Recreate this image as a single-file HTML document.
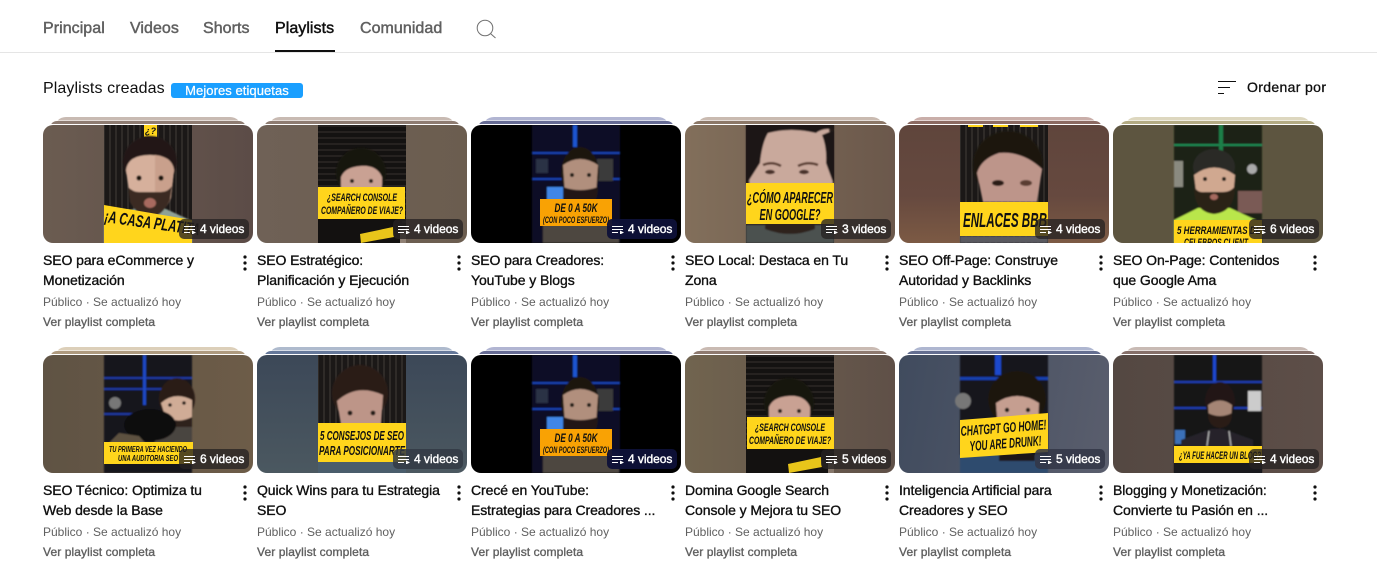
<!DOCTYPE html>
<html lang="es"><head><meta charset="utf-8"><title>Playlists</title>
<style>
html,body{margin:0;padding:0;background:#fff;width:1377px;height:564px;overflow:hidden;font-family:"Liberation Sans",Arial,sans-serif;color:#0f0f0f}
.a{position:absolute;white-space:nowrap}
.tab{top:19px;font-size:16px;line-height:20px;color:#606060;-webkit-text-stroke:.45px currentColor;letter-spacing:.05px}
.c{position:absolute;width:210px;height:210px}
.l1,.l2{position:absolute;display:block;height:14px;clip-path:inset(0 0 11px 0)}
.l1{left:11px;width:188px;top:-8px;border-radius:12px 12px 0 0;clip-path:inset(0 0 10.5px 0)}
.l2{left:7px;width:196px;top:-4px;border-radius:7px 7px 0 0}
.t{position:absolute;left:0;top:0;width:210px;height:118px;border-radius:10px;overflow:hidden}
.t>svg{position:absolute;left:0;top:0}
.b{position:absolute;left:136px;top:94px;width:70px;height:20px;border-radius:5px;background:rgba(38,34,34,.78);color:#fff;font-size:12px;line-height:20px;-webkit-text-stroke:.4px #fff}
.b svg{position:absolute;left:5px;top:7px}
.b span{position:absolute;left:21px;top:0;white-space:nowrap;letter-spacing:-.05px}
.ti{position:absolute;left:0;top:125px;font-size:14px;line-height:20px;white-space:nowrap;-webkit-text-stroke:.35px #0f0f0f;letter-spacing:-.08px}
.d{position:absolute;left:199px;top:130px}
.m{position:absolute;left:0;top:169px;font-size:12px;line-height:16px;color:#606060;white-space:nowrap}
.v{position:absolute;left:0;top:189px;font-size:12px;line-height:16px;color:#606060;white-space:nowrap;-webkit-text-stroke:.35px #606060;letter-spacing:.1px}
svg text{font-family:"Liberation Sans",Arial,sans-serif;font-weight:700;font-style:italic;fill:#111}
</style></head><body>
<svg width="0" height="0" style="position:absolute"><defs>
<pattern id="st" width="6" height="8" patternUnits="userSpaceOnUse"><rect width="6" height="8" fill="#1b1817"/><rect width="2" height="8" fill="#2f2b28"/></pattern>
<pattern id="sh" width="6" height="6" patternUnits="userSpaceOnUse"><rect width="6" height="6" fill="#141211"/><rect width="6" height="2" fill="#262220"/></pattern>
<filter id="bl" x="-10%" y="-10%" width="120%" height="120%"><feGaussianBlur stdDeviation=".9"/></filter>
</defs></svg>

<div class="a tab" style="left:43px">Principal</div>
<div class="a tab" style="left:130px">Videos</div>
<div class="a tab" style="left:203px">Shorts</div>
<div class="a tab" style="left:275px;color:#0f0f0f">Playlists</div>
<div class="a tab" style="left:360px">Comunidad</div>
<svg class="a" style="left:476px;top:19px" width="21" height="20" viewBox="0 0 21 20" fill="none" stroke="#707070" stroke-width="1"><circle cx="9" cy="9" r="7.8"/><path d="M14.7 14.7L19.5 19"/></svg>
<div class="a" style="left:0;top:52px;width:1377px;height:1px;background:#e5e5e5"></div>
<div class="a" style="left:275px;top:50px;width:60px;height:2px;background:#0f0f0f"></div>

<div class="a" style="left:43px;top:79px;font-size:16px;line-height:20px;letter-spacing:.1px">Playlists creadas</div>
<div class="a" style="left:171px;top:83px;width:132px;height:15px;border-radius:3px;background:#1a9fff;color:#fff;font-size:13px;line-height:15px;text-align:center;-webkit-text-stroke:.25px #fff;letter-spacing:.06px">Mejores etiquetas</div>
<svg class="a" style="left:1218px;top:81px" width="19" height="14" fill="#0f0f0f"><rect width="18" height="1"/><rect y="6" width="12" height="1"/><rect y="12" width="6" height="1"/></svg>
<div class="a" style="left:1247px;top:77px;font-size:14px;line-height:20px;letter-spacing:.35px;-webkit-text-stroke:.3px #0f0f0f">Ordenar por</div>

<!-- ROW 1 -->
<div class="c" style="left:43px;top:125px"><i class="l1" style="background:#c8bab2"></i><i class="l2" style="background:#8e7c72"></i>
<div class="t" style="background:linear-gradient(90deg,#6b5c51,#5c4c47)"><svg width="210" height="118">
<rect x="61" width="88" height="118" fill="url(#st)"/><rect x="101" width="13" height="12" fill="#ffd51c"/><text x="102" y="9" font-size="9">¿?</text>
<g filter="url(#bl)"><path d="M61 118V92l30-8h32l26 12v22z" fill="#8fa196"/><ellipse cx="107" cy="37" rx="27" ry="26" fill="#211815"/><path d="M83 45q2-15 24-15t24 15l-3 28q-6 15-21 15t-20-15z" fill="#d6b09c"/><path d="M112 30q17 2 19 15l-3 28q-5 13-16 15z" fill="#c9a08c"/><path d="M85 62q5 5 11 5h22q7 0 11-6l-2 14q-8 17-20 17t-20-15z" fill="#3a2a22"/><ellipse cx="107" cy="78" rx="6" ry="5" fill="#a86b5f"/><circle cx="96" cy="53" r="2.6" fill="#1a1210"/><circle cx="118" cy="53" r="2.6" fill="#1a1210"/></g>
<path d="M61 80l88 15v23H61z" fill="#ffd51c"/><text x="61" y="97" font-size="17" textLength="96" lengthAdjust="spacingAndGlyphs" transform="rotate(8 61 97)">¡A CASA PLATITA</text></svg>
<div class="b"><svg width="12" height="8" fill="#fff"><rect width="11" height="1"/><rect y="3" width="11" height="1"/><rect y="6" width="6" height="1"/><path d="M8 4.5l4 2-4 2z"/></svg><span>4 videos</span></div></div>
<div class="ti">SEO para eCommerce y<br>Monetización</div>
<svg class="d" width="6" height="16" fill="#0f0f0f"><circle cx="3" cy="2" r="1.6"/><circle cx="3" cy="8" r="1.6"/><circle cx="3" cy="14" r="1.6"/></svg>
<div class="m">Público · Se actualizó hoy</div><div class="v">Ver playlist completa</div></div>

<div class="c" style="left:257px;top:125px"><i class="l1" style="background:#c8bab2"></i><i class="l2" style="background:#8e7c72"></i>
<div class="t" style="background:linear-gradient(90deg,#6f6156,#6b5d4f)"><svg width="210" height="118">
<rect x="61" width="88" height="118" fill="url(#sh)"/>
<g filter="url(#bl)"><ellipse cx="104" cy="48" rx="25" ry="25" fill="#171210"/><path d="M84 52q4-10 20-11t21 11v12H84z" fill="#c9a193"/><circle cx="95" cy="56" r="2" fill="#241a16"/><circle cx="114" cy="56" r="2" fill="#241a16"/></g>
<path d="M61 93h84v25H61z" fill="#131110"/><rect x="143" y="104" width="6" height="14" fill="#8f8074"/>
<rect x="61" y="62" width="87" height="32" fill="#ffd51c"/>
<text x="105" y="76" font-size="11" text-anchor="middle" textLength="70" lengthAdjust="spacingAndGlyphs">¿SEARCH CONSOLE</text><text x="105" y="89" font-size="11" text-anchor="middle" textLength="82" lengthAdjust="spacingAndGlyphs">COMPAÑERO DE VIAJE?</text>
<path d="M103 109l33-7 1 10-33 6z" fill="#e8c51a"/></svg>
<div class="b"><svg width="12" height="8" fill="#fff"><rect width="11" height="1"/><rect y="3" width="11" height="1"/><rect y="6" width="6" height="1"/><path d="M8 4.5l4 2-4 2z"/></svg><span>4 videos</span></div></div>
<div class="ti">SEO Estratégico:<br>Planificación y Ejecución</div>
<svg class="d" width="6" height="16" fill="#0f0f0f"><circle cx="3" cy="2" r="1.6"/><circle cx="3" cy="8" r="1.6"/><circle cx="3" cy="14" r="1.6"/></svg>
<div class="m">Público · Se actualizó hoy</div><div class="v">Ver playlist completa</div></div>

<div class="c" style="left:471px;top:125px"><i class="l1" style="background:#b1b5d2"></i><i class="l2" style="background:#666b94"></i>
<div class="t" style="background:#000"><svg width="210" height="118">
<g filter="url(#bl)"><rect x="61" width="88" height="118" fill="#0a1026"/><path d="M61 27h88v2H61zM61 53h88v2H61z" fill="#1240b0"/><path d="M76 62h16v13H76z" fill="#3f86e6"/><rect x="102" width="4" height="22" fill="#1a55d0"/><rect x="65" y="34" width="12" height="14" fill="#2a3345"/><rect x="126" y="34" width="16" height="22" fill="#3a3a3a"/><path d="M72 118V98l22-8h30l24 8v20z" fill="#4d4641"/><ellipse cx="109" cy="48" rx="19" ry="26" fill="#1b1310"/><path d="M92 40q17-12 35 0l-2 30H94z" fill="#b18f7d"/><circle cx="101" cy="50" r="2" fill="#241a16"/><circle cx="118" cy="50" r="2" fill="#241a16"/><path d="M92 62q17 6 35 0 0 21-17 23-18-2-18-23z" fill="#241914"/></g>
<rect x="69" y="74" width="72" height="27" fill="#f9a204"/>
<text x="105" y="87" font-size="12" text-anchor="middle" textLength="43" lengthAdjust="spacingAndGlyphs">DE 0 A 50K</text><text x="105" y="98" font-size="9" text-anchor="middle" textLength="66" lengthAdjust="spacingAndGlyphs">(CON POCO ESFUERZO)</text></svg>
<div class="b" style="background:rgba(14,17,56,.95)"><svg width="12" height="8" fill="#fff"><rect width="11" height="1"/><rect y="3" width="11" height="1"/><rect y="6" width="6" height="1"/><path d="M8 4.5l4 2-4 2z"/></svg><span>4 videos</span></div></div>
<div class="ti">SEO para Creadores:<br>YouTube y Blogs</div>
<svg class="d" width="6" height="16" fill="#0f0f0f"><circle cx="3" cy="2" r="1.6"/><circle cx="3" cy="8" r="1.6"/><circle cx="3" cy="14" r="1.6"/></svg>
<div class="m">Público · Se actualizó hoy</div><div class="v">Ver playlist completa</div></div>

<div class="c" style="left:685px;top:125px"><i class="l1" style="background:#c9bab0"></i><i class="l2" style="background:#8c7868"></i>
<div class="t" style="background:linear-gradient(90deg,#826f5b,#6b584b)"><svg width="210" height="118">
<rect x="61" width="88" height="118" fill="#2a211d"/>
<g filter="url(#bl)"><path d="M66 0h78l4 62H64z" fill="#c9a99c"/><path d="M61 0h88v5q-10-3-18 3-25-6-48 0-6 10-8 30l-14 22zM149 5l-12 5q5 12 4 28l8 22z" fill="#1e1613"/><path d="M78 40q9-4 18 1M113 41q10-5 20-1" stroke="#5a3d30" stroke-width="2.5" fill="none"/><ellipse cx="85" cy="47" rx="5" ry="2.2" fill="#4a3229"/><ellipse cx="119" cy="47" rx="5" ry="2.2" fill="#4a3229"/><path d="M61 118v-18h88v18z" fill="#4c5150"/><path d="M80 98h50v6q-25 10-50 0z" fill="#2d231d"/></g>
<rect x="61" y="58" width="88" height="41" fill="#ffd51c"/>
<text x="105" y="78" font-size="16" text-anchor="middle" textLength="86" lengthAdjust="spacingAndGlyphs">¿CÓMO APARECER</text><text x="105" y="95" font-size="16" text-anchor="middle" textLength="61" lengthAdjust="spacingAndGlyphs">EN GOOGLE?</text></svg>
<div class="b"><svg width="12" height="8" fill="#fff"><rect width="11" height="1"/><rect y="3" width="11" height="1"/><rect y="6" width="6" height="1"/><path d="M8 4.5l4 2-4 2z"/></svg><span>3 videos</span></div></div>
<div class="ti">SEO Local: Destaca en Tu<br>Zona</div>
<svg class="d" width="6" height="16" fill="#0f0f0f"><circle cx="3" cy="2" r="1.6"/><circle cx="3" cy="8" r="1.6"/><circle cx="3" cy="14" r="1.6"/></svg>
<div class="m">Público · Se actualizó hoy</div><div class="v">Ver playlist completa</div></div>

<div class="c" style="left:899px;top:125px"><i class="l1" style="background:#c9aea9"></i><i class="l2" style="background:#8b6a62"></i>
<div class="t" style="background:linear-gradient(180deg,#5f453c 0%,#66493f 60%,#7c5a44 100%)"><svg width="210" height="118">
<rect x="61" width="88" height="118" fill="url(#st)"/><rect x="69" width="15" height="2" fill="#ffd51c"/><rect x="94" width="15" height="2" fill="#ffd51c"/><rect x="121" width="18" height="2" fill="#ffd51c"/>
<g filter="url(#bl)"><ellipse cx="109" cy="40" rx="35" ry="34" fill="#1a1310"/><path d="M78 48q4-14 22-20 24-2 43 16l-5 33H84z" fill="#bd958a"/><ellipse cx="99" cy="58" rx="6" ry="3" fill="#2a1a15"/><ellipse cx="127" cy="58" rx="6" ry="3" fill="#5a3d33"/><path d="M61 111h88v7H61z" fill="#5a5a60"/></g>
<rect x="61" y="77" width="88" height="34" fill="#ffd51c"/>
<text x="64" y="102" font-size="20" textLength="84" lengthAdjust="spacingAndGlyphs">ENLACES BBB</text></svg>
<div class="b"><svg width="12" height="8" fill="#fff"><rect width="11" height="1"/><rect y="3" width="11" height="1"/><rect y="6" width="6" height="1"/><path d="M8 4.5l4 2-4 2z"/></svg><span>4 videos</span></div></div>
<div class="ti">SEO Off-Page: Construye<br>Autoridad y Backlinks</div>
<svg class="d" width="6" height="16" fill="#0f0f0f"><circle cx="3" cy="2" r="1.6"/><circle cx="3" cy="8" r="1.6"/><circle cx="3" cy="14" r="1.6"/></svg>
<div class="m">Público · Se actualizó hoy</div><div class="v">Ver playlist completa</div></div>

<div class="c" style="left:1113px;top:125px"><i class="l1" style="background:#ddd7bf"></i><i class="l2" style="background:#b3ab84"></i>
<div class="t" style="background:#5d5540"><svg width="210" height="118">
<g filter="url(#bl)"><rect x="61" width="88" height="118" fill="#1a2019"/><path d="M61 19h88v2H61z" fill="#1f8a52"/><rect x="106" width="4" height="32" fill="#1c7f4a"/><rect x="61" y="36" width="9" height="26" fill="#8a8a80"/><rect x="125" y="66" width="24" height="22" fill="#7a5a55"/><circle cx="139" cy="44" r="5" fill="#aaa"/><path d="M61 95l24-12h32l26 12v23H61z" fill="#b9e64c"/><ellipse cx="101" cy="42" rx="21" ry="18" fill="#2c2a28"/><path d="M81 50q20-15 41 0l-2 24H84z" fill="#d0a890"/><circle cx="92" cy="54" r="2" fill="#241a16"/><circle cx="111" cy="54" r="2" fill="#241a16"/><path d="M81 62q4 6 11 5h18q8 0 12-6 0 26-21 28-20-2-20-27z" fill="#2b2019"/><ellipse cx="101" cy="72" rx="4" ry="3" fill="#a66a5e"/></g>
<rect x="61" y="95" width="88" height="23" fill="#ffd51c"/>
<text x="64" y="109" font-size="11" textLength="84" lengthAdjust="spacingAndGlyphs">5 HERRAMIENTAS DE</text><text x="71" y="121" font-size="11" textLength="64" lengthAdjust="spacingAndGlyphs">CELEBROS CLIENT</text></svg>
<div class="b"><svg width="12" height="8" fill="#fff"><rect width="11" height="1"/><rect y="3" width="11" height="1"/><rect y="6" width="6" height="1"/><path d="M8 4.5l4 2-4 2z"/></svg><span>6 videos</span></div></div>
<div class="ti">SEO On-Page: Contenidos<br>que Google Ama</div>
<svg class="d" width="6" height="16" fill="#0f0f0f"><circle cx="3" cy="2" r="1.6"/><circle cx="3" cy="8" r="1.6"/><circle cx="3" cy="14" r="1.6"/></svg>
<div class="m">Público · Se actualizó hoy</div><div class="v">Ver playlist completa</div></div>

<!-- ROW 2 -->
<div class="c" style="left:43px;top:355px"><i class="l1" style="background:#dccfb9"></i><i class="l2" style="background:#ae9a7f"></i>
<div class="t" style="background:linear-gradient(90deg,#5f5344,#6d5c48)"><svg width="210" height="118">
<g filter="url(#bl)"><rect x="61" width="88" height="118" fill="#16161a"/><path d="M61 22h88v2H61zM61 33h88v2H61zM61 58h40v2H61z" fill="#1c38a0"/><rect x="100" width="3" height="50" fill="#1c49c4"/><circle cx="72" cy="48" r="6" fill="#777"/><path d="M110 90l14-26 25 2v24z" fill="#4a4440"/><ellipse cx="134" cy="44" rx="18" ry="21" fill="#2b1f18"/><path d="M118 48q14-12 31-3v25h-24z" fill="#d0ac96"/><circle cx="127" cy="50" r="1.8" fill="#241a16"/><circle cx="141" cy="48" r="1.8" fill="#241a16"/><path d="M119 60q14 10 30 2v10h-24z" fill="#2e201a"/><ellipse cx="107" cy="70" rx="26" ry="16" fill="#0c0b0b"/><path d="M66 88l10-10 20 3 8 9z" fill="#5d5140"/></g>
<rect x="61" y="87" width="89" height="22" fill="#ffd51c"/>
<text x="105" y="97" font-size="8" text-anchor="middle" textLength="78" lengthAdjust="spacingAndGlyphs">TU PRIMERA VEZ HACIENDO</text><text x="105" y="106" font-size="8" text-anchor="middle" textLength="60" lengthAdjust="spacingAndGlyphs">UNA AUDITORIA SEO</text></svg>
<div class="b"><svg width="12" height="8" fill="#fff"><rect width="11" height="1"/><rect y="3" width="11" height="1"/><rect y="6" width="6" height="1"/><path d="M8 4.5l4 2-4 2z"/></svg><span>6 videos</span></div></div>
<div class="ti">SEO Técnico: Optimiza tu<br>Web desde la Base</div>
<svg class="d" width="6" height="16" fill="#0f0f0f"><circle cx="3" cy="2" r="1.6"/><circle cx="3" cy="8" r="1.6"/><circle cx="3" cy="14" r="1.6"/></svg>
<div class="m">Público · Se actualizó hoy</div><div class="v">Ver playlist completa</div></div>

<div class="c" style="left:257px;top:355px"><i class="l1" style="background:#aebacd"></i><i class="l2" style="background:#65789a"></i>
<div class="t" style="background:linear-gradient(180deg,#3c4858,#4b5860)"><svg width="210" height="118">
<rect x="61" width="88" height="118" fill="url(#st)"/>
<g filter="url(#bl)"><ellipse cx="103" cy="38" rx="28" ry="28" fill="#2a1d15"/><path d="M80 46q20-18 46-6l-2 30H84z" fill="#bd9588"/><circle cx="93" cy="58" r="2.4" fill="#241a16"/><circle cx="116" cy="58" r="2.4" fill="#241a16"/></g><path d="M61 106h88v12H61z" fill="#4a5d6c"/>
<rect x="61" y="68" width="88" height="39" fill="#ffd51c"/>
<text x="105" y="85" font-size="13" text-anchor="middle" textLength="84" lengthAdjust="spacingAndGlyphs">5 CONSEJOS DE SEO</text><text x="105" y="100" font-size="13" text-anchor="middle" textLength="86" lengthAdjust="spacingAndGlyphs">PARA POSICIONARTE</text></svg>
<div class="b" style="background:rgba(50,58,68,.85)"><svg width="12" height="8" fill="#fff"><rect width="11" height="1"/><rect y="3" width="11" height="1"/><rect y="6" width="6" height="1"/><path d="M8 4.5l4 2-4 2z"/></svg><span>4 videos</span></div></div>
<div class="ti">Quick Wins para tu Estrategia<br>SEO</div>
<svg class="d" width="6" height="16" fill="#0f0f0f"><circle cx="3" cy="2" r="1.6"/><circle cx="3" cy="8" r="1.6"/><circle cx="3" cy="14" r="1.6"/></svg>
<div class="m">Público · Se actualizó hoy</div><div class="v">Ver playlist completa</div></div>

<div class="c" style="left:471px;top:355px"><i class="l1" style="background:#b1b5d2"></i><i class="l2" style="background:#666b94"></i>
<div class="t" style="background:#000"><svg width="210" height="118">
<g filter="url(#bl)"><rect x="61" width="88" height="118" fill="#0a1026"/><path d="M61 27h88v2H61zM61 53h88v2H61z" fill="#1240b0"/><path d="M76 62h16v13H76z" fill="#3f86e6"/><rect x="102" width="4" height="22" fill="#1a55d0"/><rect x="65" y="34" width="12" height="14" fill="#2a3345"/><rect x="126" y="34" width="16" height="22" fill="#3a3a3a"/><path d="M72 118V98l22-8h30l24 8v20z" fill="#4d4641"/><ellipse cx="109" cy="48" rx="19" ry="26" fill="#1b1310"/><path d="M92 40q17-12 35 0l-2 30H94z" fill="#b18f7d"/><circle cx="101" cy="50" r="2" fill="#241a16"/><circle cx="118" cy="50" r="2" fill="#241a16"/><path d="M92 62q17 6 35 0 0 21-17 23-18-2-18-23z" fill="#241914"/></g>
<rect x="69" y="74" width="72" height="27" fill="#f9a204"/>
<text x="105" y="87" font-size="12" text-anchor="middle" textLength="43" lengthAdjust="spacingAndGlyphs">DE 0 A 50K</text><text x="105" y="98" font-size="9" text-anchor="middle" textLength="66" lengthAdjust="spacingAndGlyphs">(CON POCO ESFUERZO)</text></svg>
<div class="b" style="background:rgba(14,17,56,.95)"><svg width="12" height="8" fill="#fff"><rect width="11" height="1"/><rect y="3" width="11" height="1"/><rect y="6" width="6" height="1"/><path d="M8 4.5l4 2-4 2z"/></svg><span>4 videos</span></div></div>
<div class="ti">Crecé en YouTube:<br>Estrategias para Creadores ...</div>
<svg class="d" width="6" height="16" fill="#0f0f0f"><circle cx="3" cy="2" r="1.6"/><circle cx="3" cy="8" r="1.6"/><circle cx="3" cy="14" r="1.6"/></svg>
<div class="m">Público · Se actualizó hoy</div><div class="v">Ver playlist completa</div></div>

<div class="c" style="left:685px;top:355px"><i class="l1" style="background:#c9bab2"></i><i class="l2" style="background:#8e7a70"></i>
<div class="t" style="background:linear-gradient(90deg,#71644f,#5f5048)"><svg width="210" height="118">
<rect x="61" width="88" height="118" fill="url(#sh)"/>
<g filter="url(#bl)"><ellipse cx="104" cy="48" rx="25" ry="25" fill="#171210"/><path d="M84 52q4-10 20-11t21 11v12H84z" fill="#c9a193"/><circle cx="95" cy="56" r="2" fill="#241a16"/><circle cx="114" cy="56" r="2" fill="#241a16"/></g>
<path d="M61 93h84v25H61z" fill="#131110"/><rect x="143" y="104" width="6" height="14" fill="#85766a"/>
<rect x="62" y="62" width="87" height="32" fill="#ffd51c"/>
<text x="105" y="76" font-size="11" text-anchor="middle" textLength="70" lengthAdjust="spacingAndGlyphs">¿SEARCH CONSOLE</text><text x="105" y="89" font-size="11" text-anchor="middle" textLength="82" lengthAdjust="spacingAndGlyphs">COMPAÑERO DE VIAJE?</text>
<path d="M103 109l33-7 1 10-33 6z" fill="#e8c51a"/></svg>
<div class="b"><svg width="12" height="8" fill="#fff"><rect width="11" height="1"/><rect y="3" width="11" height="1"/><rect y="6" width="6" height="1"/><path d="M8 4.5l4 2-4 2z"/></svg><span>5 videos</span></div></div>
<div class="ti">Domina Google Search<br>Console y Mejora tu SEO</div>
<svg class="d" width="6" height="16" fill="#0f0f0f"><circle cx="3" cy="2" r="1.6"/><circle cx="3" cy="8" r="1.6"/><circle cx="3" cy="14" r="1.6"/></svg>
<div class="m">Público · Se actualizó hoy</div><div class="v">Ver playlist completa</div></div>

<div class="c" style="left:899px;top:355px"><i class="l1" style="background:#aeb6d0"></i><i class="l2" style="background:#646e90"></i>
<div class="t" style="background:linear-gradient(100deg,#404b5e,#5a5e6d)"><svg width="210" height="118">
<g filter="url(#bl)"><rect x="61" width="88" height="118" fill="#17151a"/><path d="M61 22h88v3H61z" fill="#1840b0"/><rect x="96" width="6" height="20" fill="#1a49cc"/><circle cx="64" cy="46" r="8" fill="#777"/><ellipse cx="118" cy="44" rx="29" ry="28" fill="#1c1411"/><path d="M97 48q21-14 43 0l-1 28H99z" fill="#c59e90"/><circle cx="108" cy="55" r="2.2" fill="#241a16"/><circle cx="129" cy="55" r="2.2" fill="#241a16"/><path d="M61 118v-18h88v18z" fill="#2e4c6e"/><path d="M100 100h36v6h-36z" fill="#1f1613"/></g>
<path d="M61 65l88-7v39l-88 6z" fill="#ffd51c"/>
<text x="62" y="81" font-size="14" textLength="86" lengthAdjust="spacingAndGlyphs" transform="rotate(-4.5 62 81)">CHATGPT GO HOME!</text><text x="71" y="96" font-size="14" textLength="72" lengthAdjust="spacingAndGlyphs" transform="rotate(-4.5 71 96)">YOU ARE DRUNK!</text></svg>
<div class="b" style="background:rgba(50,54,70,.85)"><svg width="12" height="8" fill="#fff"><rect width="11" height="1"/><rect y="3" width="11" height="1"/><rect y="6" width="6" height="1"/><path d="M8 4.5l4 2-4 2z"/></svg><span>5 videos</span></div></div>
<div class="ti">Inteligencia Artificial para<br>Creadores y SEO</div>
<svg class="d" width="6" height="16" fill="#0f0f0f"><circle cx="3" cy="2" r="1.6"/><circle cx="3" cy="8" r="1.6"/><circle cx="3" cy="14" r="1.6"/></svg>
<div class="m">Público · Se actualizó hoy</div><div class="v">Ver playlist completa</div></div>

<div class="c" style="left:1113px;top:355px"><i class="l1" style="background:#c8bab4"></i><i class="l2" style="background:#86706a"></i>
<div class="t" style="background:linear-gradient(90deg,#544842,#5d4e48)"><svg width="210" height="118">
<g filter="url(#bl)"><rect x="61" width="88" height="118" fill="#121319"/><path d="M61 26h88v2H61zM61 52h88v2H61z" fill="#1a3db0"/><rect x="100" width="3" height="26" fill="#1a4ad0"/><rect x="135" y="36" width="13" height="20" fill="#ccc"/><rect x="62" y="75" width="10" height="14" fill="#3a6fb8"/><path d="M68 118V85l30-11h12l30 11v33z" fill="#26242a"/><ellipse cx="107" cy="46" rx="15" ry="19" fill="#211714"/><path d="M95 50q12-9 24 0l-1 14H96z" fill="#a58575"/><path d="M95 58q12 6 24 0 0 14-12 15-12-1-12-15z" fill="#2b1f18"/><path d="M96 76l-2 15M116 76l2 15" stroke="#bbb" stroke-width="1.2"/></g>
<rect x="61" y="91" width="88" height="17" fill="#ffd51c"/>
<text x="66" y="104" font-size="11" textLength="82" lengthAdjust="spacingAndGlyphs">¿YA FUE HACER UN BLOG?</text><path d="M61 108h88v10H61z" fill="#1a1a1e"/></svg>
<div class="b"><svg width="12" height="8" fill="#fff"><rect width="11" height="1"/><rect y="3" width="11" height="1"/><rect y="6" width="6" height="1"/><path d="M8 4.5l4 2-4 2z"/></svg><span>4 videos</span></div></div>
<div class="ti">Blogging y Monetización:<br>Convierte tu Pasión en ...</div>
<svg class="d" width="6" height="16" fill="#0f0f0f"><circle cx="3" cy="2" r="1.6"/><circle cx="3" cy="8" r="1.6"/><circle cx="3" cy="14" r="1.6"/></svg>
<div class="m">Público · Se actualizó hoy</div><div class="v">Ver playlist completa</div></div>
</body></html>
